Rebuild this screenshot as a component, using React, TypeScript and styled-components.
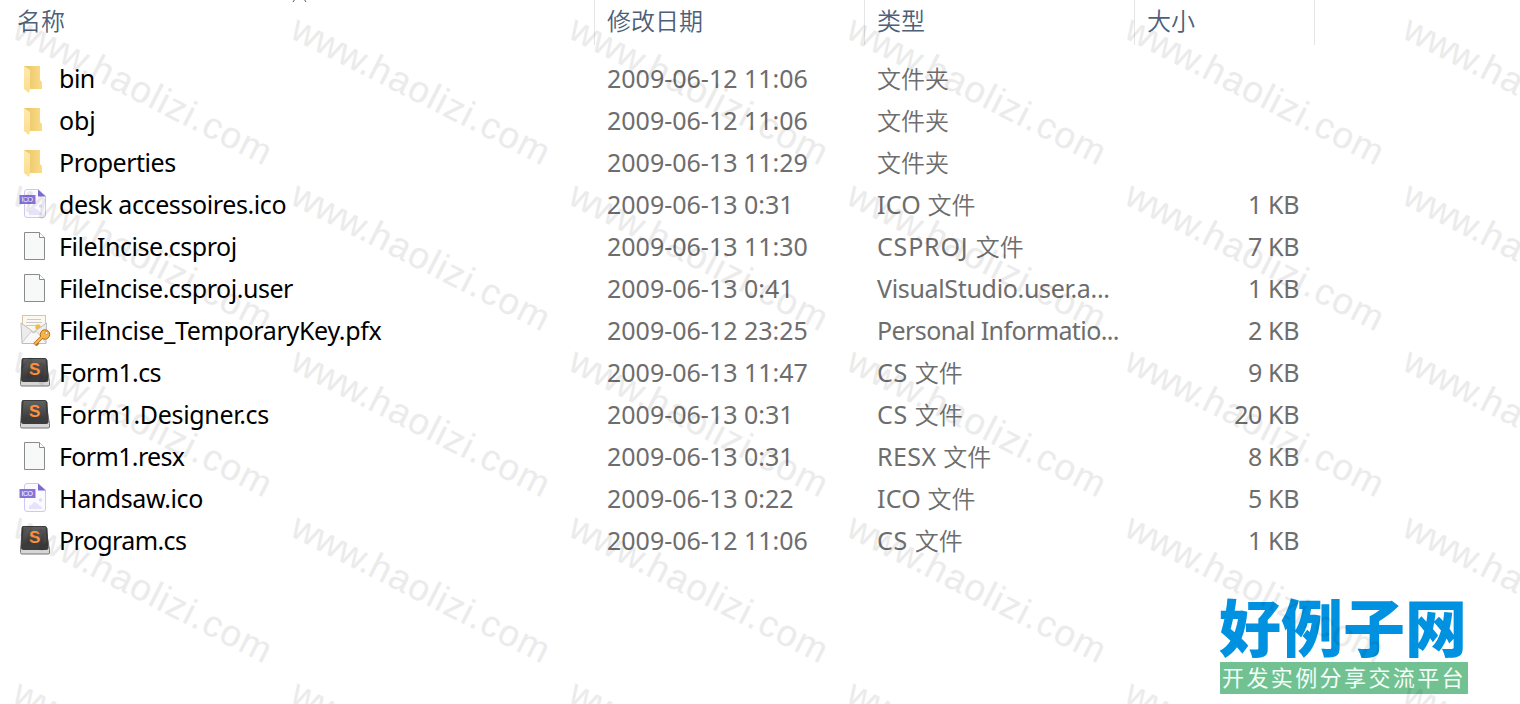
import React from 'react';
import styled, { createGlobalStyle } from 'styled-components';

const GlobalStyle = createGlobalStyle`
  body {
    margin: 0;
    background: #fff;
    overflow: hidden;
  }
`;

type FileKind = 'folder' | 'ico' | 'blank' | 'pfx' | 'sublime';

interface IFile {
  name: string;
  date: string;
  type: string;
  cjk?: string;
  size?: string;
  kind: FileKind;
  nameSpacing?: number;
  typeSpacing?: number;
}

const files: IFile[] = [
  { name: 'bin', date: '2009-06-12 11:06', type: '', cjk: '文件夹', kind: 'folder' },
  { name: 'obj', date: '2009-06-12 11:06', type: '', cjk: '文件夹', kind: 'folder', nameSpacing: -0.1 },
  { name: 'Properties', date: '2009-06-13 11:29', type: '', cjk: '文件夹', kind: 'folder' },
  { name: 'desk accessoires.ico', date: '2009-06-13 0:31', type: 'ICO ', cjk: '文件', size: '1 KB', kind: 'ico', nameSpacing: -0.4, typeSpacing: 0.2 },
  { name: 'FileIncise.csproj', date: '2009-06-13 11:30', type: 'CSPROJ ', cjk: '文件', size: '7 KB', kind: 'blank', typeSpacing: 0.8 },
  { name: 'FileIncise.csproj.user', date: '2009-06-13 0:41', type: 'VisualStudio.user.a...', size: '1 KB', kind: 'blank', typeSpacing: -0.33 },
  { name: 'FileIncise_TemporaryKey.pfx', date: '2009-06-12 23:25', type: 'Personal Informatio...', size: '2 KB', kind: 'pfx', nameSpacing: -0.33, typeSpacing: -0.6 },
  { name: 'Form1.cs', date: '2009-06-13 11:47', type: 'CS ', cjk: '文件', size: '9 KB', kind: 'sublime', nameSpacing: -0.6, typeSpacing: 0.6 },
  { name: 'Form1.Designer.cs', date: '2009-06-13 0:31', type: 'CS ', cjk: '文件', size: '20 KB', kind: 'sublime', nameSpacing: -0.33, typeSpacing: 0.6 },
  { name: 'Form1.resx', date: '2009-06-13 0:31', type: 'RESX ', cjk: '文件', size: '8 KB', kind: 'blank', nameSpacing: -0.65, typeSpacing: 0.4 },
  { name: 'Handsaw.ico', date: '2009-06-13 0:22', type: 'ICO ', cjk: '文件', size: '5 KB', kind: 'ico', nameSpacing: -0.4, typeSpacing: 0.2 },
  { name: 'Program.cs', date: '2009-06-12 11:06', type: 'CS ', cjk: '文件', size: '1 KB', kind: 'sublime', nameSpacing: -0.6, typeSpacing: 0.6 },
];

const columns = '595px 270px 270px 180px';

const Window = styled.main`
  position: relative;
  width: 1520px;
  height: 704px;
  overflow: hidden;
  background: #fff;
  font-family: 'Noto Sans', 'Noto Sans CJK SC', sans-serif;
`;

const Header = styled.div`
  display: grid;
  grid-template-columns: ${columns};
  height: 45px;
  margin-bottom: 13px;
`;

const HeaderCell = styled.div<{ $first?: boolean }>`
  box-sizing: border-box;
  padding-left: ${({ $first }) => ($first ? '17px' : '12px')};
  border-right: 1px solid #e5e5e5;
  color: #4c607a;
  font-family: 'Noto Sans CJK SC', sans-serif;
  font-size: 24px;
  font-weight: 350;
  line-height: 39px;
`;

const Row = styled.div`
  display: grid;
  grid-template-columns: ${columns};
  height: 42px;
  line-height: 40px;
  font-size: 25px;
  white-space: pre;
`;

const NameCell = styled.div`
  display: flex;
  padding-left: 18px;
  color: #000;
`;

const IconBox = styled.span`
  display: flex;
  width: 41px;
  height: 42px;

  svg {
    display: block;
  }
`;

const FileName = styled.span<{ $spacing: number }>`
  letter-spacing: ${({ $spacing }) => $spacing}px;
`;

const Cell = styled.div`
  padding-left: 12px;
  color: #6d6d6d;
`;

const TypeCell = styled(Cell)<{ $spacing: number }>`
  letter-spacing: ${({ $spacing }) => $spacing}px;
`;

const SizeCell = styled(Cell)`
  padding: 0 16px 0 0;
  text-align: right;
  letter-spacing: -0.4px;
`;

const Cjk = styled.span`
  font-family: 'Noto Sans CJK SC', sans-serif;
  font-size: 24px;
  font-weight: 350;
  line-height: 1;
  letter-spacing: 0;
`;

const SortMark = styled.svg`
  position: absolute;
  top: 0;
  left: 292px;
`;

const WatermarkLayer = styled.div`
  position: absolute;
  top: 0;
  left: 0;
  display: grid;
  grid-template-columns: repeat(6, 278.1px);
  grid-auto-rows: 166px;
  pointer-events: none;
`;

const Watermark = styled.span`
  padding: 5px 0 0 10px;
  color: #000;
  opacity: 0.075;
  font-family: 'Liberation Sans', sans-serif;
  font-size: 37px;
  line-height: 40px;
  letter-spacing: 1.2px;
  white-space: nowrap;
  -webkit-text-stroke: 0.2px #000;
  transform: rotate(26.9deg);
  transform-origin: 10px 38px;
`;

const WatermarkPrefix = styled.span`
  letter-spacing: -0.3px;
`;

const Logo = styled.div`
  position: absolute;
  top: 595px;
  left: 1219px;
  width: 249px;
`;

const LogoTitle = styled.div`
  height: 67px;
  color: #0092e0;
  font-family: 'Noto Sans CJK SC', sans-serif;
  font-size: 62px;
  font-weight: 900;
  line-height: 61px;
  white-space: nowrap;
`;

const LogoBand = styled.div`
  height: 32px;
  margin-left: 1px;
  padding-left: 2px;
  background: #72c193;
  box-sizing: border-box;
  color: #f4fff8;
  font-family: 'Noto Sans CJK SC', sans-serif;
  font-size: 22px;
  line-height: 29px;
  letter-spacing: 2.4px;
  white-space: nowrap;
`;

const FolderIcon = () => (
  <svg width="32" height="42" viewBox="0 0 32 42">
    <defs>
      <linearGradient id="folderBack">
        <stop offset="0" stopColor="#e9c464" />
        <stop offset="1" stopColor="#fbdc88" />
      </linearGradient>
      <linearGradient id="folderFront" x2="0" y2="1">
        <stop offset="0" stopColor="#ffe9ae" />
        <stop offset="1" stopColor="#fbdd8d" />
      </linearGradient>
    </defs>
    <path d="M6 8H22V22L24 24V31H6Z" fill="url(#folderBack)" />
    <path d="M6 8L12 12V31L11 35L6 31Z" fill="url(#folderFront)" />
  </svg>
);

const BlankIcon = () => (
  <svg width="32" height="42" viewBox="0 1 32 42">
    <path d="M6.5 7.5H21.5L26.5 12.5V34.5H6.5Z" fill="#f7f9f9" stroke="#8b8b8b" />
    <path d="M21.5 7.5V12.5H26.5" fill="#fff" stroke="#8b8b8b" />
  </svg>
);

const IcoIcon = () => (
  <svg width="32" height="42" viewBox="0 1 32 42">
    <path d="M6.5 9Q6.5 6.5 9 6.5H20L27.5 13V32Q27.5 34.5 25 34.5H9Q6.5 34.5 6.5 32Z" fill="#fbfaff" stroke="#cfc8f3" />
    <path d="M20 6.5L27.8 13.5H20Z" fill="#7b69d2" />
    <path d="M11 32Q10 28 14 27.5Q16 23.5 19 26.5Q21 27 21 28.5Q24 29 24 32Z" fill="#e6e2fa" />
    <circle cx="22.5" cy="23" r="1.7" fill="#ded9f8" />
    <rect x="1.5" y="12" width="16" height="9" fill="#8474da" />
    <text x="3.5" y="18.9" fill="#fff" fontSize="7" fontFamily="Liberation Sans, sans-serif" textLength="11.5">ICO</text>
  </svg>
);

const PfxIcon = () => (
  <svg width="34" height="42" viewBox="0 1 34 42">
    <rect x="4.5" y="6.5" width="23" height="18" fill="#fdf8ef" stroke="#d9c4a4" />
    <path d="M9 10.5H23M8 13.5H24M8 16.5H19" stroke="#c9c9d4" />
    <circle cx="20" cy="18" r="2.7" fill="#f1bd41" />
    <path d="M3 14L15.5 23L28.5 14L28 34.5H4Z" fill="#ececec" stroke="#bdbdbd" />
    <path d="M4 34L13 22.5Q15.5 25.5 18.5 22.5L28 34" fill="#f8f8f8" stroke="#ccc" />
    <path d="M24 28L16.5 35.5M18 34L20 36" stroke="#b96b17" strokeWidth="3.5" />
    <circle cx="27" cy="25.5" r="4.7" fill="#f5b548" stroke="#b96b17" />
    <path d="M24 28L17 35" stroke="#f8bb53" strokeWidth="1.8" />
    <circle cx="28.5" cy="24" r="1.5" fill="#fff" stroke="#b96b17" strokeWidth=".6" />
  </svg>
);

const SublimeIcon = () => (
  <svg width="34" height="42" viewBox="0 0.5 34 42">
    <defs>
      <linearGradient id="keyTop" x2="0" y2="1">
        <stop offset="0" stopColor="#606060" />
        <stop offset="1" stopColor="#3c3c3c" />
      </linearGradient>
    </defs>
    <path d="M4.5 7H27.5L31.5 30V33.5Q31.5 34.5 30 34.5H4Q2.5 34.5 2.5 33V30Z" fill="#d6d6d6" stroke="#777" />
    <path d="M3.5 9Q3.5 6.5 6 6.5H26.5Q29 6.5 29.5 9L30.5 28Q30.5 30.5 28 30.5H5.5Q3 30.5 3 28Z" fill="#3c3c3c" />
    <path d="M5.5 7.5H27.5L28.5 25H4.5Z" fill="url(#keyTop)" />
    <text x="11" y="23" fill="#ff923a" fontSize="17" fontWeight="700" fontFamily="Liberation Sans, sans-serif">S</text>
  </svg>
);

const icons: Record<FileKind, React.FC> = {
  folder: FolderIcon,
  ico: IcoIcon,
  blank: BlankIcon,
  pfx: PfxIcon,
  sublime: SublimeIcon,
};

const FileRow: React.FC<{ file: IFile }> = ({ file }) => {
  const Icon = icons[file.kind];

  return (
    <Row>
      <NameCell>
        <IconBox>
          <Icon />
        </IconBox>
        <FileName $spacing={file.nameSpacing ?? -0.48}>{file.name}</FileName>
      </NameCell>
      <Cell>{file.date}</Cell>
      <TypeCell $spacing={file.typeSpacing ?? 0}>
        {file.type}
        {file.cjk && <Cjk>{file.cjk}</Cjk>}
      </TypeCell>
      <SizeCell>{file.size}</SizeCell>
    </Row>
  );
};

const App: React.FC = () => (
  <>
    <GlobalStyle />
    <Window>
      <Header>
        <HeaderCell $first>名称</HeaderCell>
        <HeaderCell>修改日期</HeaderCell>
        <HeaderCell>类型</HeaderCell>
        <HeaderCell>大小</HeaderCell>
      </Header>
      {files.map((file) => (
        <FileRow key={file.name} file={file} />
      ))}
      <SortMark width="15" height="2" viewBox="0 0 15 2">
        <path d="M3 -1L1 2M12 -1L14 2" stroke="#555" fill="none" />
      </SortMark>
      <Logo>
        <LogoTitle>好例子网</LogoTitle>
        <LogoBand>开发实例分享交流平台</LogoBand>
      </Logo>
      <WatermarkLayer>
        {Array.from({ length: 30 }, (_, i) => (
          <Watermark key={i}>
            <WatermarkPrefix>www.</WatermarkPrefix>haolizi.com
          </Watermark>
        ))}
      </WatermarkLayer>
    </Window>
  </>
);

export default App;
